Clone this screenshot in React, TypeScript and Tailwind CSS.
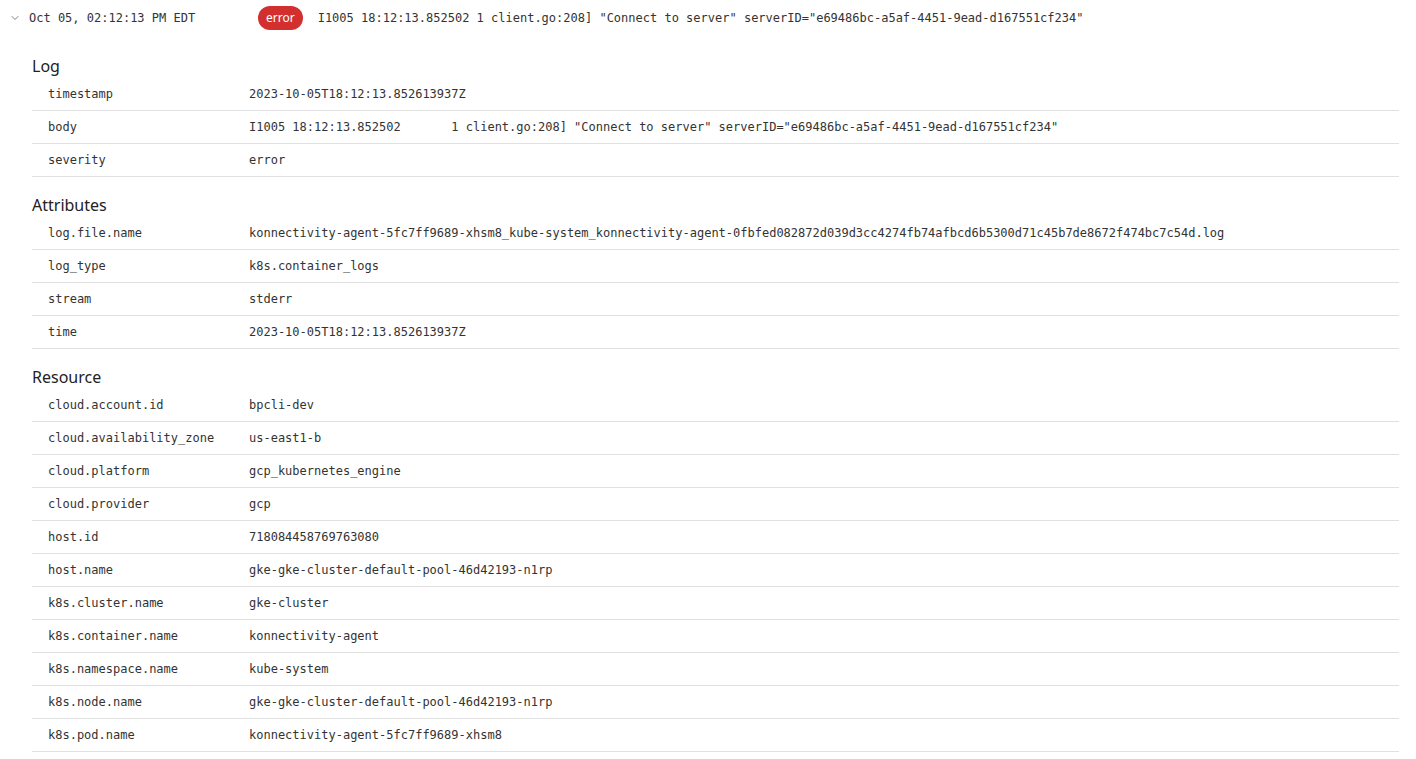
import { ChevronDown } from 'lucide-react';

type Row = [string, string];

const sections: { title: string; rows: Row[] }[] = [
  {
    title: 'Log',
    rows: [
      ['timestamp', '2023-10-05T18:12:13.852613937Z'],
      ['body', 'I1005 18:12:13.852502       1 client.go:208] "Connect to server" serverID="e69486bc-a5af-4451-9ead-d167551cf234"'],
      ['severity', 'error'],
    ],
  },
  {
    title: 'Attributes',
    rows: [
      ['log.file.name', 'konnectivity-agent-5fc7ff9689-xhsm8_kube-system_konnectivity-agent-0fbfed082872d039d3cc4274fb74afbcd6b5300d71c45b7de8672f474bc7c54d.log'],
      ['log_type', 'k8s.container_logs'],
      ['stream', 'stderr'],
      ['time', '2023-10-05T18:12:13.852613937Z'],
    ],
  },
  {
    title: 'Resource',
    rows: [
      ['cloud.account.id', 'bpcli-dev'],
      ['cloud.availability_zone', 'us-east1-b'],
      ['cloud.platform', 'gcp_kubernetes_engine'],
      ['cloud.provider', 'gcp'],
      ['host.id', '718084458769763080'],
      ['host.name', 'gke-gke-cluster-default-pool-46d42193-n1rp'],
      ['k8s.cluster.name', 'gke-cluster'],
      ['k8s.container.name', 'konnectivity-agent'],
      ['k8s.namespace.name', 'kube-system'],
      ['k8s.node.name', 'gke-gke-cluster-default-pool-46d42193-n1rp'],
      ['k8s.pod.name', 'konnectivity-agent-5fc7ff9689-xhsm8'],
    ],
  },
];

const mono = "font-['DejaVu_Sans_Mono',monospace]";

export default function App() {
  return (
    <div className="min-h-screen bg-white text-[#333]">
      <div className={`flex h-9 items-center text-xs ${mono}`}>
        <ChevronDown className="ml-[9px] h-3 w-3 text-[#555]" strokeWidth={1.5} />
        <span className="ml-[8px] w-[229px]">Oct 05, 02:12:13 PM EDT</span>
        <span className="flex h-6 items-center rounded-full bg-[#d32f2f] px-2 font-['Noto_Sans',sans-serif] text-xs text-white">
          error
        </span>
        <span className="ml-[15px]">
          I1005 18:12:13.852502 1 client.go:208] "Connect to server" serverID="e69486bc-a5af-4451-9ead-d167551cf234"
        </span>
      </div>

      <div className="px-8 pt-[18px]">
        {sections.map((section) => (
          <div key={section.title} className="mb-4">
            <h2 className="h-6 font-['Noto_Sans',sans-serif] text-base leading-6 text-[#222]">
              {section.title}
            </h2>
            <div className="mr-[-15px]">
              {section.rows.map(([key, value]) => (
                <div key={key} className={`flex border-b border-[#e0e0e0] py-2 text-xs leading-4 ${mono}`}>
                  <div className="w-[217px] shrink-0 pl-4">{key}</div>
                  <div className="whitespace-pre">{value}</div>
                </div>
              ))}
            </div>
          </div>
        ))}
      </div>
    </div>
  );
}
